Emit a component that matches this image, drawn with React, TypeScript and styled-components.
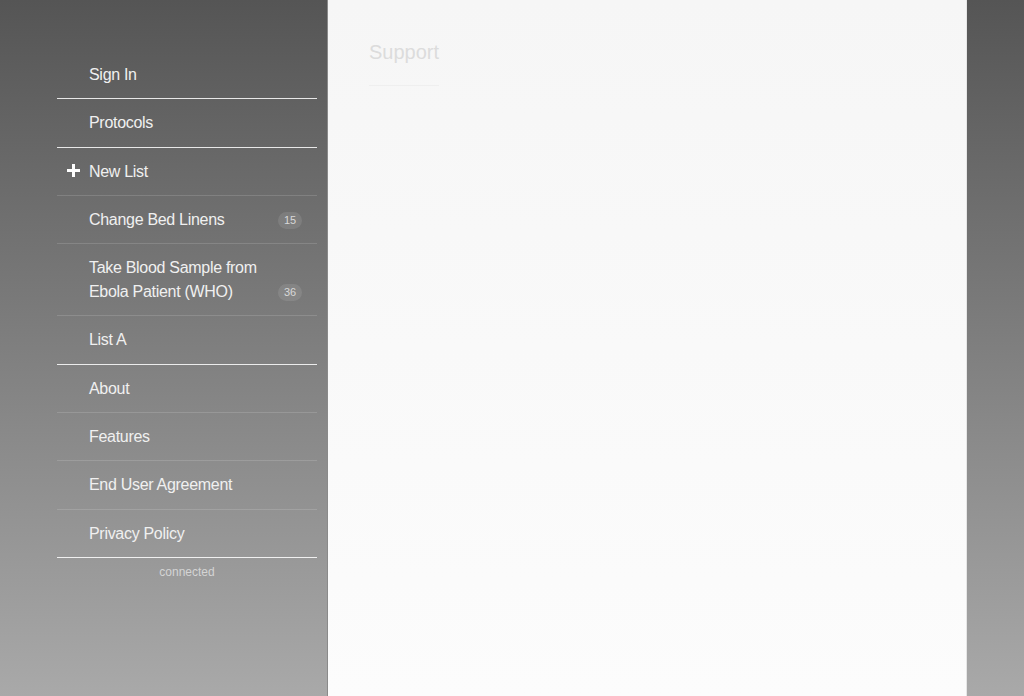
import React from 'react'
import styled, { createGlobalStyle } from 'styled-components'

type Item = {
  label: string
  badge?: number
  icon?: boolean
}

const sections: Item[][] = [
  [{ label: 'Sign In' }],
  [{ label: 'Protocols' }],
  [
    { label: 'New List', icon: true },
    { label: 'Change Bed Linens', badge: 15 },
    { label: 'Take Blood Sample from Ebola Patient (WHO)', badge: 36 },
    { label: 'List A' },
  ],
  [
    { label: 'About' },
    { label: 'Features' },
    { label: 'End User Agreement' },
    { label: 'Privacy Policy' },
  ],
]

const App: React.FC = () => {
  return (
    <>
      <GlobalStyle />
      <Page>
        <Sidebar>
          <Menu>
            {sections.map((section, si) => (
              <Section key={si}>
                {section.map((item, ii) => (
                  <Row key={item.label} last={ii === section.length - 1}>
                    {item.icon && (
                      <PlusIcon width='13' height='13' viewBox='0 0 13 13'>
                        <path d='M5 0h3v5h5v3H8v5H5V8H0V5h5z' fill='#fff' />
                      </PlusIcon>
                    )}
                    <Label>{item.label}</Label>
                    {item.badge !== undefined && <Badge>{item.badge}</Badge>}
                  </Row>
                ))}
              </Section>
            ))}
          </Menu>
          <Status>connected</Status>
        </Sidebar>
        <Main>
          <Heading>Support</Heading>
        </Main>
      </Page>
    </>
  )
}

export default App

const GlobalStyle = createGlobalStyle`
  html, body {
    margin: 0;
    padding: 0;
    height: 100%;
  }
  body {
    font-family: 'Liberation Sans', Arial, sans-serif;
    background: linear-gradient(to bottom, #555555 0%, #a9a9a9 100%);
    overflow: hidden;
  }
`

const Page = styled.div`
  display: flex;
  height: 696px;
  width: 1024px;
`

const Sidebar = styled.div`
  width: 260px;
  padding: 51px 10px 0 57px;
  flex-shrink: 0;
`

const Menu = styled.div`
  display: flex;
  flex-direction: column;
`

const Section = styled.div`
  display: flex;
  flex-direction: column;
  border-bottom: 1px solid rgba(255, 255, 255, 0.85);
`

const Row = styled.div<{ last: boolean }>`
  position: relative;
  display: flex;
  align-items: flex-end;
  padding: 12px 15px 11.3px 32px;
  border-bottom: ${(p) => (p.last ? 'none' : '1px solid rgba(255, 255, 255, 0.14)')};
`

const PlusIcon = styled.svg`
  position: absolute;
  left: 10px;
  top: 16px;
`

const Label = styled.span`
  flex: 1;
  font-size: 16px;
  line-height: 24px;
  color: #f0f0f0;
  padding-right: 4px;
  letter-spacing: -0.3px;
`

const Badge = styled.span`
  display: inline-block;
  min-width: 24px;
  height: 17px;
  margin-bottom: 3px;
  border-radius: 9px;
  background: rgba(255, 255, 255, 0.1);
  color: #d8d8d8;
  font-size: 11px;
  line-height: 17px;
  text-align: center;
`

const Status = styled.div`
  text-align: center;
  font-size: 12px;
  line-height: 28px;
  color: #d4d4d4;
`

const Main = styled.div`
  width: 640px;
  height: 696px;
  flex-shrink: 0;
  padding: 39px 41px 0;
  box-sizing: border-box;
  background: linear-gradient(to bottom, #f6f6f6 0%, #fcfcfc 100%);
  border-left: 1px solid #8a8a8a;
  border-right: 1px solid #e6e6e6;
`

const Heading = styled.h1`
  display: inline-block;
  margin: 0;
  padding-bottom: 20px;
  font-size: 20px;
  line-height: 26px;
  font-weight: 400;
  color: #dcdcdc;
  border-bottom: 1px solid #efefef;
`
